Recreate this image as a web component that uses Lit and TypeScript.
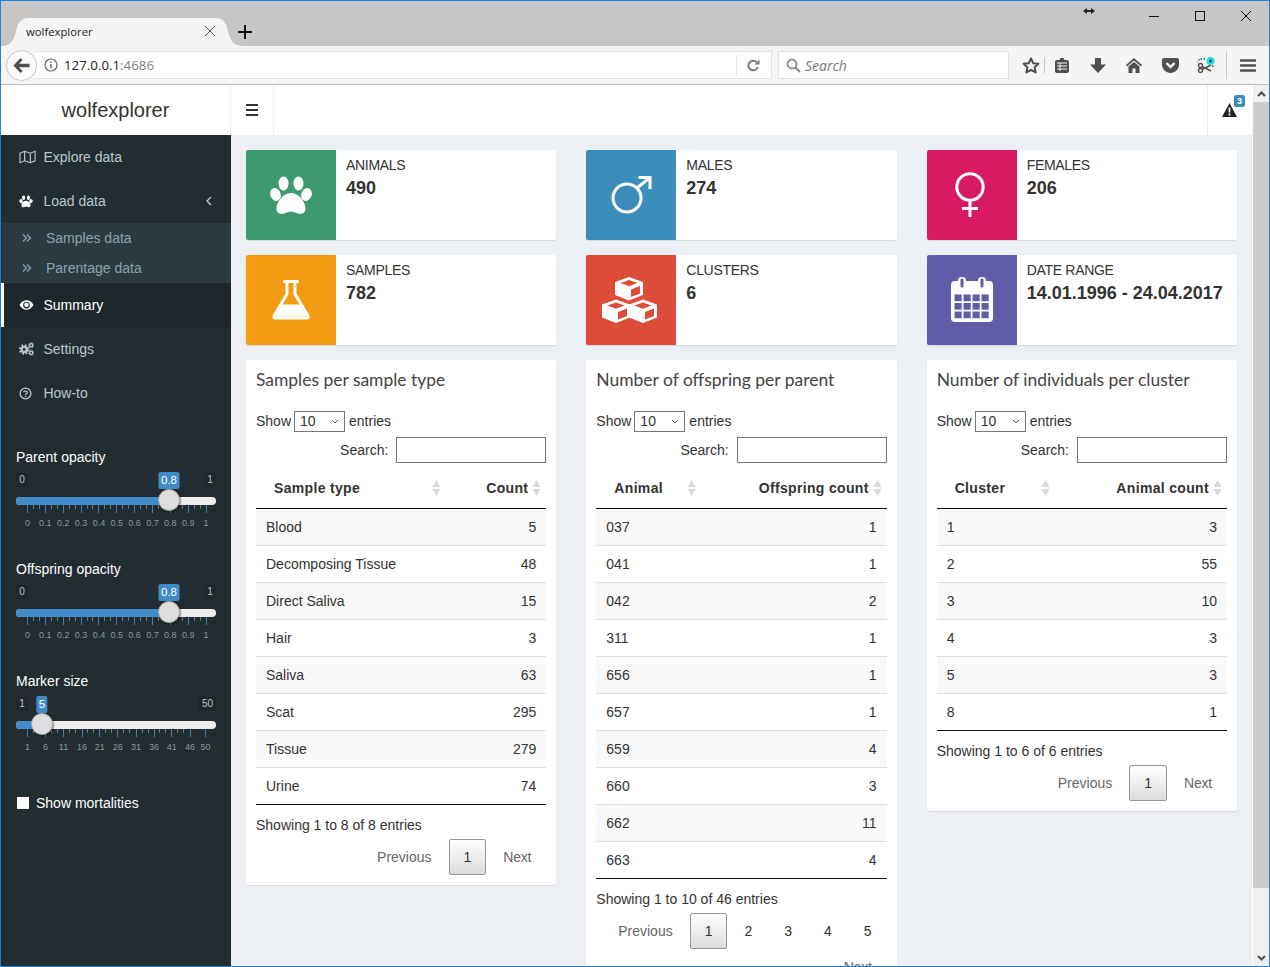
import { LitElement, html, css, svg } from "lit";
import { customElement } from "lit/decorators.js";

type Slider = { label: string; min: string; max: string; value: string; pos: number; labels: string[]; xs: number[] };

const opLabels = ["0", "0.1", "0.2", "0.3", "0.4", "0.5", "0.6", "0.7", "0.8", "0.9", "1"];
const opXs = opLabels.map((_, i) => 11 + i * 17.85);
const mkLabels = ["1", "6", "11", "16", "21", "26", "31", "36", "41", "46", "50"];
const mkXs = [11, 29, 47, 65.5, 83.3, 101.2, 119.5, 137.5, 155.3, 173.5, 189];

const sliders: Slider[] = [
  { label: "Parent opacity", min: "0", max: "1", value: "0.8", pos: 153, labels: opLabels, xs: opXs },
  { label: "Offspring opacity", min: "0", max: "1", value: "0.8", pos: 153, labels: opLabels, xs: opXs },
  { label: "Marker size", min: "1", max: "50", value: "5", pos: 26, labels: mkLabels, xs: mkXs },
];

type Table = {
  title: string; h1: string; h2: string; w1: number; rows: [string, string][];
  info: string; pages: string[];
};

const tables: Table[] = [
  {
    title: "Samples per sample type", h1: "Sample type", h2: "Count", w1: 190,
    rows: [["Blood", "5"], ["Decomposing Tissue", "48"], ["Direct Saliva", "15"], ["Hair", "3"], ["Saliva", "63"], ["Scat", "295"], ["Tissue", "279"], ["Urine", "74"]],
    info: "Showing 1 to 8 of 8 entries", pages: ["1"],
  },
  {
    title: "Number of offspring per parent", h1: "Animal", h2: "Offspring count", w1: 105,
    rows: [["037", "1"], ["041", "1"], ["042", "2"], ["311", "1"], ["656", "1"], ["657", "1"], ["659", "4"], ["660", "3"], ["662", "11"], ["663", "4"]],
    info: "Showing 1 to 10 of 46 entries", pages: ["1", "2", "3", "4", "5"],
  },
  {
    title: "Number of individuals per cluster", h1: "Cluster", h2: "Animal count", w1: 118,
    rows: [["1", "3"], ["2", "55"], ["3", "10"], ["4", "3"], ["5", "3"], ["8", "1"]],
    info: "Showing 1 to 6 of 6 entries", pages: ["1"],
  },
];

const cube = (cx: number, t: number, c: string) => svg`
  <path fill="#fff" d="M${cx} ${t}L${cx + 14} ${t + 5}V${t + 18}L${cx} ${t + 23.5}L${cx - 14} ${t + 18}V${t + 5}Z"/>
  <path fill="${c}" d="M${cx} ${t + 3}L${cx + 8.5} ${t + 6}L${cx} ${t + 9.2}L${cx - 8.5} ${t + 6}Z"/>
  <path fill="${c}" d="M${cx + 2} ${t + 12.5}L${cx + 11} ${t + 9}V${t + 16.5}L${cx + 2} ${t + 20}Z"/>`;

const icons = {
  paw: svg`<g fill="#fff"><ellipse cx="37.5" cy="33.5" rx="5" ry="7"/><ellipse cx="52.5" cy="33.5" rx="5" ry="7"/><ellipse cx="29.5" cy="44.5" rx="5.2" ry="6.6" transform="rotate(-18 29.5 44.5)"/><ellipse cx="60.5" cy="44.5" rx="5.2" ry="6.6" transform="rotate(18 60.5 44.5)"/><path d="M45 43C36 43 30.5 53 30.5 58.5C30.5 63.5 35 64.5 38 63.5C41 62.5 43 61.5 45 61.5C47 61.5 49 62.5 52 63.5C55 64.5 59.5 63.5 59.5 58.5C59.5 53 54 43 45 43Z"/></g>`,
  flask: svg`<rect x="37" y="25" width="16" height="3" rx="1.2" fill="#fff"/><path d="M41 27V39L28.5 60Q26.5 63 30 63H60Q63.5 63 61.5 60L49 39V27" fill="none" stroke="#fff" stroke-width="3" stroke-linejoin="round"/><path d="M35.5 49.5H54.5L61 61.5H29Z" fill="#fff"/>`,
  mars: svg`<g fill="none" stroke="#fff" stroke-width="3"><circle cx="41" cy="48" r="14"/><path d="M51 38L63.5 28"/><path d="M52.5 27.5H64V39"/></g>`,
  venus: svg`<g fill="none" stroke="#fff" stroke-width="3"><circle cx="43" cy="37" r="13.2"/><path d="M43 50V67M35 58.5H51"/></g>`,
  cubes: svg`${cube(43, 22, "#dd4b39")}${cube(30, 44.5, "#dd4b39")}${cube(57, 44.5, "#dd4b39")}`,
  calendar: svg`<rect x="24" y="26" width="42" height="41" rx="4" fill="#fff"/>
    <g fill="#605ca8">${[0, 1, 2].map((r) => [0, 1, 2, 3].map((c) => svg`<rect x="${27.5 + c * 9}" y="${39.5 + r * 8.5}" width="7.2" height="6.7"/>`))}</g>
    <path d="M31 33.5V25Q31 22 35 22Q39 22 39 25V33.5ZM51 33.5V25Q51 22 55 22Q59 22 59 25V33.5Z" fill="#fff"/>
    <path d="M35 25V31M55 25V31" stroke="#605ca8" stroke-width="3" stroke-linecap="round"/>`,
};

const side = {
  map: html`<svg viewBox="0 0 18 14" width="17" height="14"><path d="M1 3L6 1L12 3L17 1V11L12 13L6 11L1 13ZM6 1V11M12 3V13" fill="none" stroke="currentColor" stroke-width="1.2"/></svg>`,
  paw: html`<svg viewBox="24 22 42 44" width="14" height="14">${icons.paw}</svg>`,
  eye: html`<svg viewBox="0 0 16 12" width="15" height="12"><path d="M0.5 6C3 2 5.5 1 8 1S13 2 15.5 6C13 10 10.5 11 8 11S3 10 0.5 6Z" fill="#fff"/><circle cx="8" cy="6" r="3.6" fill="#1e282c"/><circle cx="8" cy="5.6" r="2.4" fill="#fff"/></svg>`,
  cogs: html`<svg viewBox="0 0 16 14" width="15" height="14"><g fill="none" stroke="currentColor"><circle cx="5.5" cy="7.5" r="2.8" stroke-width="2.6"/><circle cx="5.5" cy="7.5" r="4.8" stroke-width="1.8" stroke-dasharray="1.9 1.9"/><circle cx="13" cy="3" r="1.7" stroke-width="1.5"/><circle cx="13" cy="11" r="1.7" stroke-width="1.5"/><circle cx="13" cy="3" r="2.8" stroke-width="1" stroke-dasharray="1.2 1.2"/><circle cx="13" cy="11" r="2.8" stroke-width="1" stroke-dasharray="1.2 1.2"/></g></svg>`,
  help: html`<svg viewBox="0 0 14 14" width="13" height="13"><circle cx="7" cy="7" r="5.8" fill="none" stroke="currentColor" stroke-width="1.4"/><path d="M5 5.6C5 4 9 3.8 9 5.8C9 7.2 7 7 7 8.4" fill="none" stroke="currentColor" stroke-width="1.3"/><rect x="6.3" y="9.3" width="1.4" height="1.4" fill="currentColor"/></svg>`,
};

const grey = "#4f4f4f";

@customElement("app-root")
export class AppRoot extends LitElement {
  static styles = css`
    :host { display: block; font-family: "Liberation Sans", Arial, sans-serif; font-size: 14px; color: #333; }
    * { box-sizing: border-box; }
    .win { width: 1270px; height: 967px; border: 1px solid #1a84d8; display: flex; flex-direction: column; overflow: hidden; background: #fff; }

    .tabbar { height: 45px; background: #c6c6c6; display: flex; flex: none; padding: 17px 0 0 15px; position: relative; }
    .tab { width: 213px; height: 28px; position: relative; display: flex; align-items: center; padding: 0 13px 2px 10px; font: 11.3px "Open Sans", sans-serif; color: #222; }
    .tab > svg.shape { position: absolute; left: -15px; top: 0; }
    .tab span { position: relative; flex: 1; }
    .tab .x { position: relative; display: block; }
    .plus { margin: 7px 0 0 9px; height: 14px; display: block; }
    .winctl { position: absolute; inset: 0 0 auto auto; display: flex; height: 30px; }
    .winctl svg { display: block; }
    .wc { width: 46px; height: 30px; display: flex; align-items: center; justify-content: center; }
    .resize { position: absolute; right: 174px; top: 6px; }

    .toolbar { height: 39px; flex: none; background: #f5f5f5; border-bottom: 1px solid #bdbdbd; display: flex; align-items: center; padding: 0 0 0 6px; }
    .back { width: 31px; height: 31px; margin-left: -1px; border-radius: 50%; background: #fbfbfb; border: 1px solid #c8c8c8; display: flex; align-items: center; justify-content: center; flex: none; position: relative; z-index: 1; }
    .url { width: 739px; height: 28px; margin-left: -1px; background: #fff; border: 1px solid #e2e2e2; border-left: none; display: flex; align-items: center; padding-left: 8px; font: 13.3px "Open Sans", sans-serif; color: #222; }
    .url .i { margin-right: 6px; display: block; }
    .url .port { color: #808080; }
    .url .grow { flex: 1; }
    .url .rel { width: 35px; height: 20px; border-left: 1px solid #e2e2e2; display: flex; align-items: center; justify-content: center; }
    .search { width: 232px; height: 28px; margin-left: 6px; background: #fff; border: 1px solid #e2e2e2; display: flex; align-items: center; padding-left: 7px; gap: 4px; font: italic 14px "Open Sans", sans-serif; color: #7b7b7b; }
    .tools { display: flex; align-items: center; margin-left: 13px; }
    .tb { width: 36px; height: 24px; display: flex; align-items: center; justify-content: center; flex: none; }
    .star { width: 18px; margin-right: 4px; }
    .tsep { width: 1px; height: 16px; background: #c8c8c8; flex: none; }
    .tsep.tall { height: 28px; margin-left: 2px; }

    .viewport { flex: 1; display: flex; min-height: 0; }
    .doc { flex: 1; min-width: 0; display: flex; flex-direction: column; }
    .sb { width: 16px; margin-left: 1px; background: #f0f0f0; display: flex; flex-direction: column; flex: none; }
    .sb .arrow { height: 17px; display: flex; align-items: center; justify-content: center; flex: none; }
    .sb .thumb { height: 786px; background: #cdcdcd; flex: none; }
    .sb .rest { flex: 1; }

    .hdr { height: 50px; flex: none; display: flex; background: #fff; }
    .logo { width: 230px; border-right: 1px solid #eee; display: flex; align-items: center; justify-content: center; font-size: 20px; color: #333; }
    .toggle { width: 43px; border-right: 1px solid #eee; display: flex; align-items: center; justify-content: center; }
    .hspace { flex: 1; }
    .alert { width: 45px; border-left: 1px solid #eee; position: relative; display: flex; align-items: center; justify-content: center; padding: 0 1px 0 0; }
    .badge { position: absolute; left: 26px; top: 10px; width: 11px; height: 12px; border-radius: 2px; background: #3c8dbc; color: #fff; font-size: 9px; font-weight: 700; line-height: 12px; text-align: center; }

    .body { flex: 1; min-height: 0; display: flex; }
    .sidebar { width: 230px; flex: none; background: #222d32; color: #b8c7ce; }
    .item { height: 44px; display: flex; align-items: center; padding-left: 18px; }
    .item .ic { width: 25px; margin-right: -0.6px; display: flex; align-items: center; }
    .item .chev { margin-left: auto; margin-right: 19px; display: block; }
    .item.active { background: #1e282c; border-left: 3px solid #fff; padding-left: 15px; color: #fff; }
    .sub { background: #2c3b41; color: #8aa4af; margin-left: 1px; }
    .sub div { height: 30px; display: flex; align-items: center; padding-left: 20px; }
    .sub svg { margin-right: 14px; display: block; }

    .sl { margin: 0 0 0 15px; width: 200px; height: 112px; color: #fff; }
    .sliders { margin-top: 32px; }
    .sl .lab { height: 20px; line-height: 20px; }
    .w { position: relative; height: 92px; }
    .mm { position: absolute; top: 6px; height: 14px; padding: 0 3px; min-width: 12px; background: #1d262a; border-radius: 3px; font-size: 10px; line-height: 14px; color: #b8c7ce; text-align: center; }
    .val { position: absolute; top: 5px; height: 17px; padding: 0 2.5px; background: #428bca; color: #fff; border-radius: 2px; font-size: 11.5px; line-height: 17px; transform: translateX(-50%); }
    .track { position: absolute; left: 0; right: 0; top: 30px; height: 8px; border-radius: 4px; background: #eee; overflow: hidden; }
    .track i { display: block; height: 100%; background: #428bca; }
    .handle { position: absolute; top: 22px; width: 22px; height: 22px; border-radius: 50%; background: #dedede; border: 1px solid #aaa; box-shadow: 1px 1px 2px rgba(0,0,0,.4); transform: translateX(-50%); }
    .tick { position: absolute; top: 38px; width: 1px; height: 4px; background: #6d7c84; }
    .tick.maj { height: 8px; background: #4b7da6; }
    .tl { position: absolute; top: 51px; font-size: 9px; line-height: 11px; color: #8a9aa1; transform: translateX(-50%); }
    .chk { display: flex; align-items: center; color: #fff; margin: 10px 0 0 16px; height: 20px; }
    .chk i { width: 12px; height: 12px; background: #fff; margin-right: 7px; display: block; }

    .content { flex: 1; min-width: 0; background: #ecf0f5; padding: 15px; overflow: hidden; }
    .grid { display: grid; grid-template-columns: repeat(3, 1fr); column-gap: 30px; row-gap: 15px; align-items: start; }
    .ibox { height: 90px; background: #fff; border-radius: 2px; box-shadow: 0 1px 1px rgba(0,0,0,.1); display: flex; }
    .ibox .ico { width: 90px; flex: none; border-radius: 2px 0 0 2px; }
    .ibox .ico svg { display: block; }
    .ibox .txt { padding: 5px 10px; min-width: 0; }
    .ibox .t { line-height: 20px; letter-spacing: -0.3px; }
    .ibox .n { font-size: 18px; font-weight: 700; line-height: 26px; white-space: nowrap; }

    .box { background: #fff; border-radius: 3px; box-shadow: 0 1px 1px rgba(0,0,0,.1); padding: 10px; }
    .title { font: 17.45px/20px Lato, sans-serif; color: #444; height: 20px; margin-bottom: 20px; white-space: nowrap; }
    .len { height: 22px; display: flex; align-items: center; gap: 4px; }
    .selw { position: relative; height: 21px; margin-left: -1px; }
    .selw svg { position: absolute; right: 6px; top: 8px; display: block; pointer-events: none; }
    select { appearance: none; display: block; width: 51px; height: 21px; font: 14px "Liberation Sans", sans-serif; color: #333; background: #fff; border: 1px solid #767676; border-radius: 0; padding: 0 0 0 5px; }
    .flt { display: flex; justify-content: flex-end; align-items: center; margin-top: 5px; height: 26px; gap: 8px; }
    .flt input { width: 150px; height: 26px; border: 1px solid #767676; background: #fff; padding: 0; margin: 0; }
    table { width: 100%; border-collapse: separate; border-spacing: 0; table-layout: fixed; margin-top: 5px; }
    th { height: 41px; padding: 0 18px 1px; font-weight: 700; text-align: left; border-bottom: 1px solid #111; position: relative; white-space: nowrap; letter-spacing: 0.33px; }
    th.r, td.r { text-align: right; }
    th svg { position: absolute; right: 5px; top: 12px; display: block; }
    td { height: 37px; padding: 0 10px 1px; border-bottom: 1px solid #ddd; }
    tr.odd td { background: #f9f9f9; }
    tr.last td { border-bottom-color: #111; }
    .info { margin-top: 10px; height: 20px; line-height: 20px; }
    .pg { display: flex; flex-wrap: wrap; justify-content: flex-end; margin: 4px 0 0; }
    .pg span { height: 36px; padding: 0 14px; margin-left: 2px; line-height: 35px; border: 1px solid transparent; border-radius: 2px; color: #333; }
    .pg span.off { color: #666; }
    .pg span.next { letter-spacing: -0.2px; }
    .pg span.cur { border-color: #979797; background: linear-gradient(#fff, #dcdcdc); }
  `;

  private slider(s: Slider) {
    const ticks: { x: number; maj: boolean }[] = [];
    s.xs.forEach((x, i) => {
      ticks.push({ x, maj: true });
      if (i < s.xs.length - 1) {
        const n = s.xs[i + 1] - x < 17 ? 1 : 3;
        for (let k = 1; k < n; k++) ticks.push({ x: x + ((s.xs[i + 1] - x) * k) / n, maj: false });
      }
    });
    return html`<div class="sl">
      <div class="lab">${s.label}</div>
      <div class="w">
        <div class="mm" style="left:0">${s.min}</div>
        <div class="mm" style="right:0">${s.max}</div>
        <div class="track"><i style="width:${s.pos}px"></i></div>
        ${ticks.map((t) => html`<div class="tick ${t.maj ? "maj" : ""}" style="left:${t.x}px"></div>`)}
        ${s.labels.map((l, i) => html`<div class="tl" style="left:${s.xs[i] + 0.5}px">${l}</div>`)}
        <div class="handle" style="left:${s.pos}px"></div>
        <div class="val" style="left:${s.pos}px">${s.value}</div>
      </div>
    </div>`;
  }

  private sort() {
    return html`<svg width="9" height="16" viewBox="0 0 9 16"><path d="M4.5 0L8.5 7H.5Z M.5 9H8.5L4.5 16Z" fill="#d9d9d9"/></svg>`;
  }

  private ibox(t: string, n: string, c: string, ic: unknown) {
    return html`<div class="ibox">
      <div class="ico" style="background:${c}"><svg width="90" height="90" viewBox="0 0 90 90">${ic}</svg></div>
      <div class="txt"><div class="t">${t}</div><div class="n">${n}</div></div>
    </div>`;
  }

  private table(t: Table) {
    return html`<div class="box">
      <div class="title">${t.title}</div>
      <div class="len">Show <span class="selw"><select><option>10</option></select><svg width="8" height="5" viewBox="0 0 8 5"><path d="M1 1L4 4L7 1" fill="none" stroke="#555" stroke-width="1"/></svg></span> entries</div>
      <div class="flt">Search: <input /></div>
      <table>
        <colgroup><col style="width:${t.w1}px" /><col /></colgroup>
        <thead><tr><th>${t.h1}${this.sort()}</th><th class="r">${t.h2}${this.sort()}</th></tr></thead>
        <tbody>
          ${t.rows.map((r, i) => html`<tr class="${i % 2 === 0 ? "odd" : ""} ${i === t.rows.length - 1 ? "last" : ""}"><td>${r[0]}</td><td class="r">${r[1]}</td></tr>`)}
        </tbody>
      </table>
      <div class="info">${t.info}</div>
      <div class="pg">
        <span class="off">Previous</span>
        ${t.pages.map((p, i) => html`<span class="${i === 0 ? "cur" : ""}">${p}</span>`)}
        <span class="off next">Next</span>
      </div>
    </div>`;
  }

  render() {
    return html`<div class="win">
      <div class="tabbar">
        <div class="tab">
          <svg class="shape" width="243" height="28" viewBox="0 0 243 28"><path d="M0 28C9 28 13 23 15 13C17 4 20 0 28 0H214C222 0 225 4 227 13C229 23 233 28 243 28Z" fill="#f5f5f5"/></svg>
          <span>wolfexplorer</span>
          <svg class="x" width="12" height="12" viewBox="0 0 12 12"><path d="M1 1L11 11M11 1L1 11" stroke="#555" stroke-width="1"/></svg>
        </div>
        <svg class="plus" width="14" height="14" viewBox="0 0 14 14"><path d="M7 0V14M0 7H14" stroke="#111" stroke-width="2"/></svg>
        <svg class="resize" width="12" height="8" viewBox="0 0 12 8"><path d="M0 4L4 1V3H8V1L12 4L8 7V5H4V7Z" fill="#222"/></svg>
        <div class="winctl">
          <div class="wc"><svg width="10" height="10" viewBox="0 0 10 10"><path d="M0 5.5H10" stroke="#111"/></svg></div>
          <div class="wc"><svg width="10" height="10" viewBox="0 0 10 10"><rect x=".5" y=".5" width="9" height="9" fill="none" stroke="#111"/></svg></div>
          <div class="wc"><svg width="10" height="10" viewBox="0 0 10 10"><path d="M0 0L10 10M10 0L0 10" stroke="#111"/></svg></div>
        </div>
      </div>
      <div class="toolbar">
        <div class="back"><svg width="17" height="15" viewBox="0 0 17 15"><path d="M7.5 0L0.5 7.5L7.5 15L9.5 13L6 9.3H16.5V5.7H6L9.5 2Z" fill="${grey}"/></svg></div>
        <div class="url">
          <svg class="i" width="14" height="14" viewBox="0 0 14 14"><circle cx="7" cy="7" r="6" fill="none" stroke="#666" stroke-width="1.2"/><path d="M7 6V10.5M7 3.5V5" stroke="#666" stroke-width="1.4"/></svg>
          <span>127.0.0.1<span class="port">:4686</span></span>
          <span class="grow"></span>
          <div class="rel"><svg width="13" height="13" viewBox="0 0 13 13"><path d="M10.8 8A4.8 4.8 0 1 1 9.5 3" fill="none" stroke="#777" stroke-width="2"/><path d="M7.5 5.5H12.5V.5Z" fill="#777"/></svg></div>
        </div>
        <div class="search">
          <svg width="15" height="15" viewBox="0 0 15 15"><circle cx="6" cy="6" r="4.5" fill="none" stroke="#8a8a8a" stroke-width="1.8"/><path d="M9.5 9.5L14 14" stroke="#8a8a8a" stroke-width="2.2"/></svg>
          <span>Search</span>
        </div>
        <div class="tools">
          <div class="tb star"><svg width="18" height="17" viewBox="0 0 18 17"><path d="M9 1.5L11.2 6.2L16.4 6.8L12.6 10.3L13.6 15.4L9 12.9L4.4 15.4L5.4 10.3L1.6 6.8L6.8 6.2Z" fill="none" stroke="${grey}" stroke-width="2" stroke-linejoin="round"/></svg></div>
          <div class="tsep"></div>
          <div class="tb" style="margin-left:-1px"><svg width="14" height="15" viewBox="0 0 14 15"><path d="M2 2H4.5L5.5 0H8.5L9.5 2H12Q14 2 14 4V13Q14 15 12 15H2Q0 15 0 13V4Q0 2 2 2Z" fill="${grey}"/><path d="M2 5H12M2 8H12M2 11H12M5 5V13" stroke="#f5f5f5" stroke-width="1"/></svg></div>
          <div class="tb"><svg width="16" height="15" viewBox="0 0 16 15"><path d="M5 0H11V6.5H16L8 15L0 6.5H5Z" fill="${grey}"/></svg></div>
          <div class="tb"><svg width="16" height="15" viewBox="0 0 16 15"><path d="M8 0L16 7L15 8.4L8 2.6L1 8.4L0 7Z M8 4L13.5 8.5V15H9.5V10.5H6.5V15H2.5V8.5Z" fill="${grey}"/></svg></div>
          <div class="tb"><svg width="17" height="15" viewBox="0 0 17 15"><path d="M2 0H15Q17 0 17 2V6.5C17 11 13 15 8.5 15S0 11 0 6.5V2Q0 0 2 0Z" fill="${grey}"/><path d="M4.5 5L8.5 9L12.5 5" fill="none" stroke="#f5f5f5" stroke-width="2.4"/></svg></div>
          <div class="tb"><svg width="18" height="16" viewBox="0 0 18 16"><circle cx="3.5" cy="8.5" r="2" fill="none" stroke="${grey}" stroke-width="1.4"/><circle cx="3.5" cy="13.5" r="2" fill="none" stroke="${grey}" stroke-width="1.4"/><path d="M5 9.5L14 14M5 12.5L14 8" stroke="${grey}" stroke-width="1.6"/><path d="M2 3.5V2H9M15 9H17M0.5 5H1" stroke="${grey}" stroke-width="1.3" stroke-dasharray="1.5 1.5" fill="none"/><circle cx="13.5" cy="4" r="4" fill="#19e0ef"/><circle cx="13.5" cy="4" r="1.6" fill="#23505a"/></svg></div>
          <div class="tsep tall"></div>
          <div class="tb" style="width:42px"><svg width="16" height="13" viewBox="0 0 16 13"><path d="M1 1.5H15M1 6.5H15M1 11.5H15" stroke="${grey}" stroke-width="2.6" stroke-linecap="round"/></svg></div>
        </div>
      </div>
      <div class="viewport">
        <div class="doc">
          <div class="hdr">
            <div class="logo">wolfexplorer</div>
            <div class="toggle"><svg width="12" height="12" viewBox="0 0 12 12"><path d="M0 1H12M0 6H12M0 11H12" stroke="#333" stroke-width="2"/></svg></div>
            <div class="hspace"></div>
            <div class="alert">
              <svg width="15" height="14" viewBox="0 0 15 14"><path d="M7.5 0L15 14H0Z" fill="#222"/><path d="M7.5 4.5V9.5M7.5 10.5V12.5" stroke="#fff" stroke-width="1.7"/></svg>
              <span class="badge">3</span>
            </div>
          </div>
          <div class="body">
            <div class="sidebar">
              <div class="item"><span class="ic">${side.map}</span>Explore data</div>
              <div class="item"><span class="ic">${side.paw}</span>Load data<svg class="chev" width="6" height="10" viewBox="0 0 6 10"><path d="M5 1L1 5L5 9" fill="none" stroke="currentColor" stroke-width="1.4"/></svg></div>
              <div class="sub">
                <div><svg width="10" height="10" viewBox="0 0 10 10"><path d="M1 1.5L4.5 5L1 8.5M5 1.5L8.5 5L5 8.5" fill="none" stroke="currentColor" stroke-width="1.3"/></svg>Samples data</div>
                <div><svg width="10" height="10" viewBox="0 0 10 10"><path d="M1 1.5L4.5 5L1 8.5M5 1.5L8.5 5L5 8.5" fill="none" stroke="currentColor" stroke-width="1.3"/></svg>Parentage data</div>
              </div>
              <div class="item active"><span class="ic">${side.eye}</span>Summary</div>
              <div class="item"><span class="ic">${side.cogs}</span>Settings</div>
              <div class="item"><span class="ic">${side.help}</span>How-to</div>
              <div class="sliders">${sliders.map((s) => this.slider(s))}</div>
              <div class="chk"><i></i>Show mortalities</div>
            </div>
            <div class="content">
              <div class="grid">
                ${this.ibox("ANIMALS", "490", "#3d9970", icons.paw)}
                ${this.ibox("MALES", "274", "#3c8dbc", icons.mars)}
                ${this.ibox("FEMALES", "206", "#d81b60", icons.venus)}
                ${this.ibox("SAMPLES", "782", "#f39c12", icons.flask)}
                ${this.ibox("CLUSTERS", "6", "#dd4b39", icons.cubes)}
                ${this.ibox("DATE RANGE", "14.01.1996 - 24.04.2017", "#605ca8", icons.calendar)}
                ${tables.map((t) => this.table(t))}
              </div>
            </div>
          </div>
        </div>
        <div class="sb">
          <div class="arrow"><svg width="9" height="6" viewBox="0 0 9 6"><path d="M1 5L4.5 1.5L8 5" fill="none" stroke="#505050" stroke-width="2"/></svg></div>
          <div class="thumb"></div>
          <div class="rest"></div>
          <div class="arrow"><svg width="9" height="6" viewBox="0 0 9 6"><path d="M1 1L4.5 4.5L8 1" fill="none" stroke="#505050" stroke-width="2"/></svg></div>
        </div>
      </div>
    </div>`;
  }
}
